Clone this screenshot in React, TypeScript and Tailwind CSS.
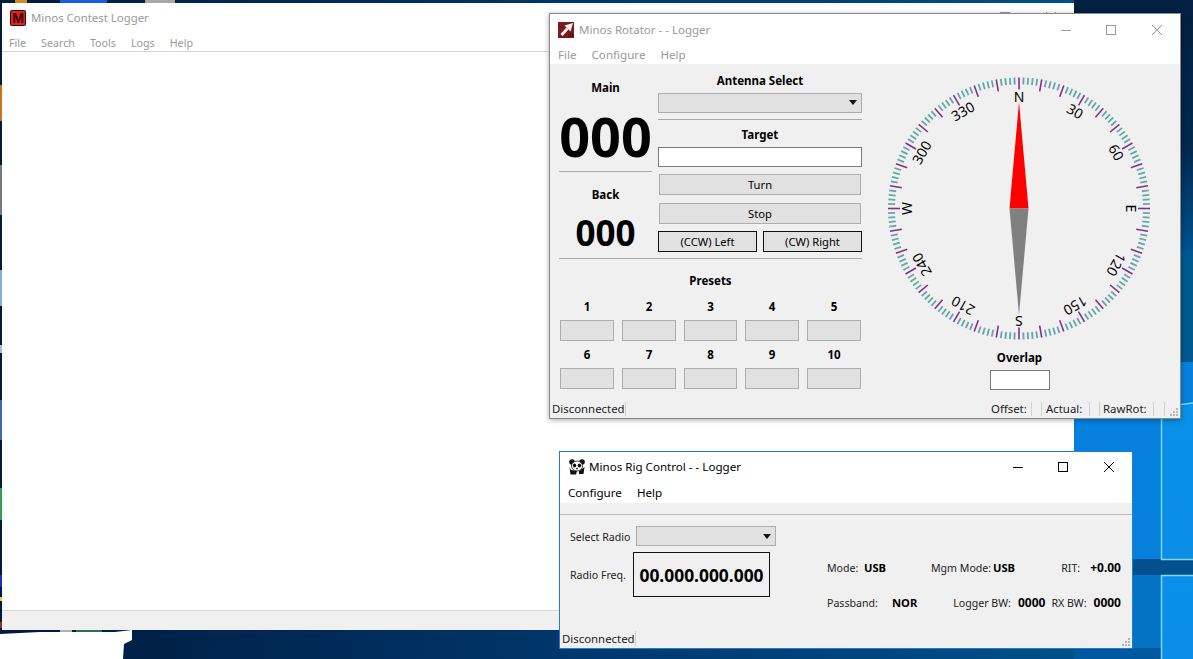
import React from "react";

const ui = "font-['Noto_Sans','Open_Sans',sans-serif]";

function Grip({ className = "" }: { className?: string }) {
  return (
    <svg width="10" height="10" viewBox="0 0 10 10" className={className}>
      <g fill="#b5b5b5">
        <rect x="7" y="1" width="2" height="2" />
        <rect x="4" y="4" width="2" height="2" />
        <rect x="7" y="4" width="2" height="2" />
        <rect x="1" y="7" width="2" height="2" />
        <rect x="4" y="7" width="2" height="2" />
        <rect x="7" y="7" width="2" height="2" />
      </g>
    </svg>
  );
}

function WinButtons({ color, gap1, gap2 }: { color: string; gap1: string; gap2: string }) {
  return (
    <div className="flex items-center">
      <svg width="10" height="10" viewBox="0 0 10 10" className={gap1}>
        <path d="M0 5.5H10" stroke={color} strokeWidth="1" />
      </svg>
      <svg width="10" height="10" viewBox="0 0 10 10" className={gap2}>
        <rect x="0.5" y="0.5" width="9" height="9" fill="none" stroke={color} strokeWidth="1" />
      </svg>
      <svg width="10" height="10" viewBox="0 0 10 10">
        <path d="M0 0L10 10M10 0L0 10" stroke={color} strokeWidth="1" />
      </svg>
    </div>
  );
}

function Wallpaper() {
  return (
    <svg width="1193" height="659" viewBox="0 0 1193 659" className="absolute left-0 top-0">
      <defs>
        <linearGradient id="bg" x1="0" y1="0" x2="1" y2="0">
          <stop offset="0" stopColor="#001a3c" />
          <stop offset="0.5" stopColor="#00386e" />
          <stop offset="1" stopColor="#00558f" />
        </linearGradient>
        <linearGradient id="top" x1="0" y1="0" x2="0" y2="1">
          <stop offset="0" stopColor="#021f40" />
          <stop offset="0.6" stopColor="#02294f" />
          <stop offset="1" stopColor="#01508f" />
        </linearGradient>
        <linearGradient id="pane" x1="0" y1="0" x2="0" y2="1">
          <stop offset="0" stopColor="#0a90e8" />
          <stop offset="1" stopColor="#0a8ee6" />
        </linearGradient>
      </defs>
      <rect width="1193" height="659" fill="url(#bg)" />
      <rect x="1074" y="0" width="119" height="250" fill="url(#top)" />
      <rect x="1074" y="250" width="119" height="112" fill="#01578f" />
      <rect x="1074" y="362" width="119" height="197" fill="#0580dc" />
      <rect x="1074" y="559" width="119" height="16" fill="#04508f" />
      <rect x="1074" y="575" width="119" height="84" fill="#0473c4" />
      <rect x="1074" y="648" width="88" height="11" fill="#00589f" />
      <polygon points="1162,408 1193,404 1193,559 1162,559" fill="url(#pane)" />
      <polygon points="1162,576 1193,575 1193,659 1162,659" fill="url(#pane)" />
      <path d="M1161.5 407V559.5H1193M1161.5 659V575.5H1193M1161.5 407L1193 403" stroke="#7fd6fb" strokeWidth="1.5" fill="none" />
      <g>
        <rect x="15" y="0" width="12" height="3" fill="#d08a20" />
        <rect x="60" y="0" width="47" height="3" fill="#1860d8" />
        <rect x="145" y="0" width="30" height="3" fill="#a8a8a8" />
        <rect x="0" y="85" width="2" height="36" fill="#d0701c" />
        <rect x="0" y="165" width="2" height="50" fill="#7a7a7a" />
        <rect x="0" y="270" width="2" height="36" fill="#7fb0d8" />
        <rect x="0" y="345" width="2" height="8" fill="#a0c0e0" />
        <rect x="0" y="400" width="2" height="40" fill="#3a6cb0" />
        <rect x="0" y="488" width="2" height="32" fill="#30a050" />
        <rect x="0" y="575" width="2" height="12" fill="#1a30c0" />
        <rect x="0" y="597" width="2" height="4" fill="#e0d040" />
        <rect x="0" y="622" width="2" height="6" fill="#903020" />
        <rect x="60" y="630" width="12" height="2" fill="#b0b0b0" />
        <rect x="76" y="630" width="26" height="2" fill="#2a7050" />
      </g>
      <polygon points="0,634 40,632 115,632 132,630 132,640 124,644 123,659 0,659" fill="#ffffff" />
    </svg>
  );
}

function MainWindow() {
  return (
    <div className={`absolute left-[2px] top-[3px] w-[1072px] h-[627px] bg-white flex flex-col ${ui}`}>
      <div className="h-[30px] flex items-center pl-[8px] pr-[18px]">
        <svg width="16" height="16" viewBox="0 0 16 16" className="shrink-0">
          <rect width="16" height="16" rx="2" fill="#1a1010" />
          <rect x="1" y="1" width="14" height="14" rx="1" fill="#f41a1a" />
          <text x="8" y="13" textAnchor="middle" fontSize="14" fontWeight="900" fill="#240808" fontFamily="Liberation Sans">M</text>
        </svg>
        <span className="ml-[5px] text-[11.4px] leading-none text-[#999]">Minos Contest Logger</span>
        <div className="ml-auto -mt-[2px]">
          <WinButtons color="#999" gap1="mr-[35px]" gap2="mr-[36px]" />
        </div>
      </div>
      <div className="h-[19px] pt-[2px] flex items-center pl-[7px] gap-[15px] text-[10.7px] leading-none text-[#999] border-b border-[#d5d5d5]">
        <span>File</span>
        <span>Search</span>
        <span>Tools</span>
        <span>Logs</span>
        <span>Help</span>
      </div>
      <div className="flex-1" />
      <div className="h-[20px] bg-[#f0f0f0] border-t border-[#d8d8d8]" />
    </div>
  );
}

function Compass() {
  const cx = 131;
  const cy = 131.5;
  const ticks: React.ReactNode[] = [];
  for (let a = 0; a < 360; a += 2) {
    const major = a % 10 === 0;
    const r1 = major ? 119 : 124;
    const r2 = 131;
    const t = (a * Math.PI) / 180;
    ticks.push(
      <line
        key={a}
        x1={cx + r1 * Math.sin(t)}
        y1={cy - r1 * Math.cos(t)}
        x2={cx + r2 * Math.sin(t)}
        y2={cy - r2 * Math.cos(t)}
        stroke={major ? "#8b2a90" : "#63a8a4"}
        strokeWidth={major ? 1.6 : 1.8}
      />
    );
  }
  const labels: [number, string][] = [
    [0, "N"], [30, "30"], [60, "60"], [90, "E"], [120, "120"], [150, "150"],
    [180, "S"], [210, "210"], [240, "240"], [270, "W"], [300, "300"], [330, "330"],
  ];
  return (
    <svg width="263" height="263" viewBox="0 0 263 263">
      {ticks}
      {labels.map(([a, s]) => (
        <text
          key={a}
          x={cx}
          y={cy - 107}
          textAnchor="middle"
          fontSize="14"
          fill="#000"
          fontFamily="Noto Sans, sans-serif"
          transform={`rotate(${a} ${cx} ${cy})`}
        >
          {s}
        </text>
      ))}
      <polygon points={`${cx},25 ${cx + 9.5},${cy} ${cx - 9.5},${cy}`} fill="#ff0000" />
      <polygon points={`${cx},238 ${cx + 9.5},${cy} ${cx - 9.5},${cy}`} fill="#808080" />
    </svg>
  );
}

const boxCls = "h-[21px] bg-[#e1e1e1] border border-[#adadad]";

function Presets({ nums }: { nums: string[] }) {
  const widths = ["w-[54px]", "w-[54px]", "w-[53px]", "w-[54px]", "w-[54px]"];
  return (
    <div className="flex gap-[8px] pl-[1px]">
      {nums.map((n, i) => (
        <div key={n} className={`${widths[i]} flex flex-col items-center`}>
          <div className="h-[20px] mb-[3px] flex items-center text-[11.5px] font-bold leading-none text-black">{n}</div>
          <div className={`w-full ${boxCls}`} />
        </div>
      ))}
    </div>
  );
}

function RotatorWindow() {
  const btn = "bg-[#e1e1e1] h-[21px] pt-[2px] flex items-center justify-center text-[11.2px] text-black";
  return (
    <div className={`absolute left-[549px] top-[13px] w-[632px] h-[406px] bg-[#f0f0f0] border border-[#8a8a8a] shadow-[0_1px_5px_rgba(0,0,0,0.35)] flex flex-col ${ui}`}>
      <div className="bg-white h-[50px] shrink-0 flex flex-col">
        <div className="h-[32px] flex items-center pl-[8px] pr-[18px]">
          <svg width="16" height="16" viewBox="0 0 16 16" className="shrink-0">
            <rect width="16" height="16" fill="#7e1a1a" />
            <path d="M15 1L6.5 3.5L12.5 9.5Z" fill="#f6f6f6" />
            <path d="M2.5 12L8.5 5.5L10.5 7.5L4.5 14Z" fill="#f6f6f6" />
            <path d="M1 3L4 6M11 15L13 11M14 15L15 12" stroke="#2a0a0a" strokeWidth="1" />
          </svg>
          <span className="ml-[5px] text-[11.5px] leading-none text-[#999]">Minos Rotator - - Logger</span>
          <div className="ml-auto">
            <WinButtons color="#999" gap1="mr-[35px]" gap2="mr-[36px]" />
          </div>
        </div>
        <div className="h-[18px] flex items-center pl-[8px] gap-[15px] text-[11.6px] leading-none text-[#999]">
          <span>File</span>
          <span>Configure</span>
          <span>Help</span>
        </div>
      </div>
      <div className="flex-1 flex min-h-0">
        <div className="w-[313px] pl-[9px] shrink-0 flex flex-col">
          <div className="flex h-[195px] border-b border-[#a8a8a8] w-[303px] shrink-0">
            <div className="w-[93px] flex flex-col items-center shrink-0">
              <div className="h-[108px] w-full border-b border-[#a8a8a8] flex flex-col items-center">
                <div className="mt-[18px] text-[11.5px] leading-none font-bold text-black">Main</div>
                <div className="mt-[12px] h-[60px] flex items-center text-[54px] leading-none font-bold text-black">000</div>
              </div>
              <div className="mt-[17px] text-[11.5px] leading-none font-bold text-black">Back</div>
              <div className="mt-[14px] text-[35px] leading-none font-bold text-black">000</div>
            </div>
            <div className="ml-[6px] w-[204px] flex flex-col shrink-0">
              <div className="text-center mt-[11px] text-[11.5px] leading-none font-bold text-black">Antenna Select</div>
              <div className="mt-[6px] h-[20px] bg-[#e1e1e1] border border-[#adadad] flex items-center justify-end pr-[4px]">
                <svg width="8" height="5" viewBox="0 0 8 5"><path d="M0 0H8L4 5Z" fill="#111" /></svg>
              </div>
              <div className="mt-[6px] border-b border-[#a8a8a8]" />
              <div className="text-center mt-[9px] text-[11.5px] leading-none font-bold text-black">Target</div>
              <div className="mt-[7px] h-[20px] bg-white border border-[#7a7a7a]" />
              <div className={`mt-[7px] mx-[1px] border border-[#adadad] ${btn}`}>Turn</div>
              <div className={`mt-[8px] mx-[1px] border border-[#adadad] ${btn}`}>Stop</div>
              <div className="mt-[7px] flex justify-between">
                <div className={`w-[99px] border border-[#111] ${btn}`}>(CCW) Left</div>
                <div className={`w-[99px] border border-[#111] ${btn}`}>(CW) Right</div>
              </div>
            </div>
          </div>
          <div className="w-[303px] text-center mt-[16px] text-[11.5px] leading-none font-bold text-black">Presets</div>
          <div className="mt-[10px]">
            <Presets nums={["1", "2", "3", "4", "5"]} />
          </div>
          <div className="mt-[4px]">
            <Presets nums={["6", "7", "8", "9", "10"]} />
          </div>
        </div>
        <div className="flex-1 flex flex-col pl-[25px]">
          <div className="mt-[13px] h-[263px]">
            <Compass />
          </div>
          <div className="w-[263px] flex flex-col items-center">
            <div className="mt-[12px] text-[11.5px] leading-none font-bold text-black">Overlap</div>
            <div className="mt-[6px] w-[60px] h-[20px] bg-white border border-[#7a7a7a]" />
          </div>
        </div>
      </div>
      <div className="h-[19px] shrink-0 flex items-center text-[11.4px] leading-none text-[#222] relative pl-[2px]">
        <span className="w-[72px] whitespace-nowrap">Disconnected</span>
        <span className="h-[14px] border-l border-[#d0d0d0] ml-[1px]" />
        <span className="ml-[365px] w-[35px] whitespace-nowrap">Offset:</span>
        <span className="h-[14px] border-l border-[#d0d0d0] ml-[5px]" />
        <span className="h-[14px] border-l border-[#d0d0d0] ml-[9px]" />
        <span className="ml-[4px] w-[38px] whitespace-nowrap">Actual:</span>
        <span className="h-[14px] border-l border-[#d0d0d0] ml-[5px]" />
        <span className="h-[14px] border-l border-[#d0d0d0] ml-[9px]" />
        <span className="ml-[3px] w-[45px] whitespace-nowrap">RawRot:</span>
        <span className="h-[14px] border-l border-[#d0d0d0] ml-[5px]" />
        <span className="h-[14px] border-l border-[#d0d0d0] ml-[10px]" />
        <Grip className="absolute right-[1px] bottom-[1px]" />
      </div>
    </div>
  );
}

function Panda() {
  return (
    <svg width="16" height="16" viewBox="0 0 16 16" className="shrink-0">
      <circle cx="3" cy="3" r="2.8" fill="#111" />
      <circle cx="13" cy="3" r="2.8" fill="#111" />
      <path d="M0.5 8L1.5 15.5H7L8 12L2 11ZM15.5 8L14.5 15H10L10 12Z" fill="#111" />
      <ellipse cx="8" cy="7" rx="5.5" ry="5" fill="#fff" stroke="#111" strokeWidth="0.8" />
      <ellipse cx="5.6" cy="6.5" rx="1.7" ry="2.1" fill="#111" />
      <ellipse cx="10.4" cy="6.5" rx="1.7" ry="2.1" fill="#111" />
      <circle cx="8" cy="9.6" r="0.9" fill="#111" />
    </svg>
  );
}

function RigWindow() {
  const label = "text-[10.6px] leading-none text-[#222] whitespace-nowrap";
  const val = "text-[12px] leading-none font-bold text-black whitespace-nowrap";
  const shortVal = "text-[11.2px] leading-none font-bold text-black";
  return (
    <div className={`absolute left-[559px] top-[451px] w-[574px] h-[198px] bg-[#f0f0f0] border border-[#1a7fd0] flex flex-col ${ui}`}>
      <div className="bg-white h-[51px] shrink-0 flex flex-col">
        <div className="h-[30px] flex items-center pl-[9px] pr-[18px]">
          <Panda />
          <span className="ml-[4px] text-[11.6px] leading-none text-black">Minos Rig Control - - Logger</span>
          <div className="ml-auto">
            <WinButtons color="#000" gap1="mr-[35px]" gap2="mr-[36px]" />
          </div>
        </div>
        <div className="h-[21px] flex items-center pl-[8px] gap-[15px] text-[11.6px] leading-none text-black">
          <span>Configure</span>
          <span>Help</span>
        </div>
      </div>
      <div className="h-[12px] shrink-0 border-b border-[#bdbdbd]" />
      <div className="flex-1 flex min-h-0 pl-[10px]">
        <div className="w-[257px] shrink-0 flex flex-col">
          <div className="mt-[11px] flex items-center">
            <span className={`w-[66px] pt-[2px] ${label}`}>Select Radio</span>
            <div className="w-[140px] h-[20px] bg-[#e1e1e1] border border-[#adadad] flex items-center justify-end pr-[4px]">
              <svg width="8" height="5" viewBox="0 0 8 5"><path d="M0 0H8L4 5Z" fill="#111" /></svg>
            </div>
          </div>
          <div className="mt-[6px] flex items-center">
            <span className={`w-[63px] pt-[2px] ${label}`}>Radio Freq.</span>
            <div className="w-[137px] h-[45px] pt-[2px] border border-[#111] flex items-center justify-center text-[17.4px] leading-none font-bold text-black">
              00.000.000.000
            </div>
          </div>
        </div>
        <div className="flex-1 flex flex-col mt-[47px] pr-[11px]">
          <div className="flex items-center h-[12px]">
            <span className={`w-[37px] ${label}`}>Mode:</span>
            <span className={`w-[67px] ${shortVal}`}>USB</span>
            <span className={`w-[62px] ${label}`}>Mgm Mode:</span>
            <span className={shortVal}>USB</span>
            <span className={`ml-auto ${label}`}>RIT:</span>
            <span className={`ml-[10px] ${val}`}>+0.00</span>
          </div>
          <div className="flex items-center h-[12px] mt-[23px]">
            <span className={`w-[65px] ${label}`}>Passband:</span>
            <span className={shortVal}>NOR</span>
            <span className={`ml-auto ${label}`}>Logger BW:</span>
            <span className={`ml-[7px] ${val}`}>0000</span>
            <span className={`ml-[6px] ${label}`}>RX BW:</span>
            <span className={`ml-[7px] ${val}`}>0000</span>
          </div>
        </div>
      </div>
      <div className="h-[19px] shrink-0 flex items-center text-[11.4px] leading-none text-[#222] relative pl-[2px]">
        <span className="w-[72px] whitespace-nowrap">Disconnected</span>
        <span className="h-[15px] border-l border-[#d0d0d0] ml-[1px]" />
        <Grip className="absolute right-[1px] bottom-[1px]" />
      </div>
    </div>
  );
}

export default function App() {
  return (
    <div className="relative w-[1193px] h-[659px] overflow-hidden">
      <Wallpaper />
      <MainWindow />
      <RotatorWindow />
      <RigWindow />
    </div>
  );
}
